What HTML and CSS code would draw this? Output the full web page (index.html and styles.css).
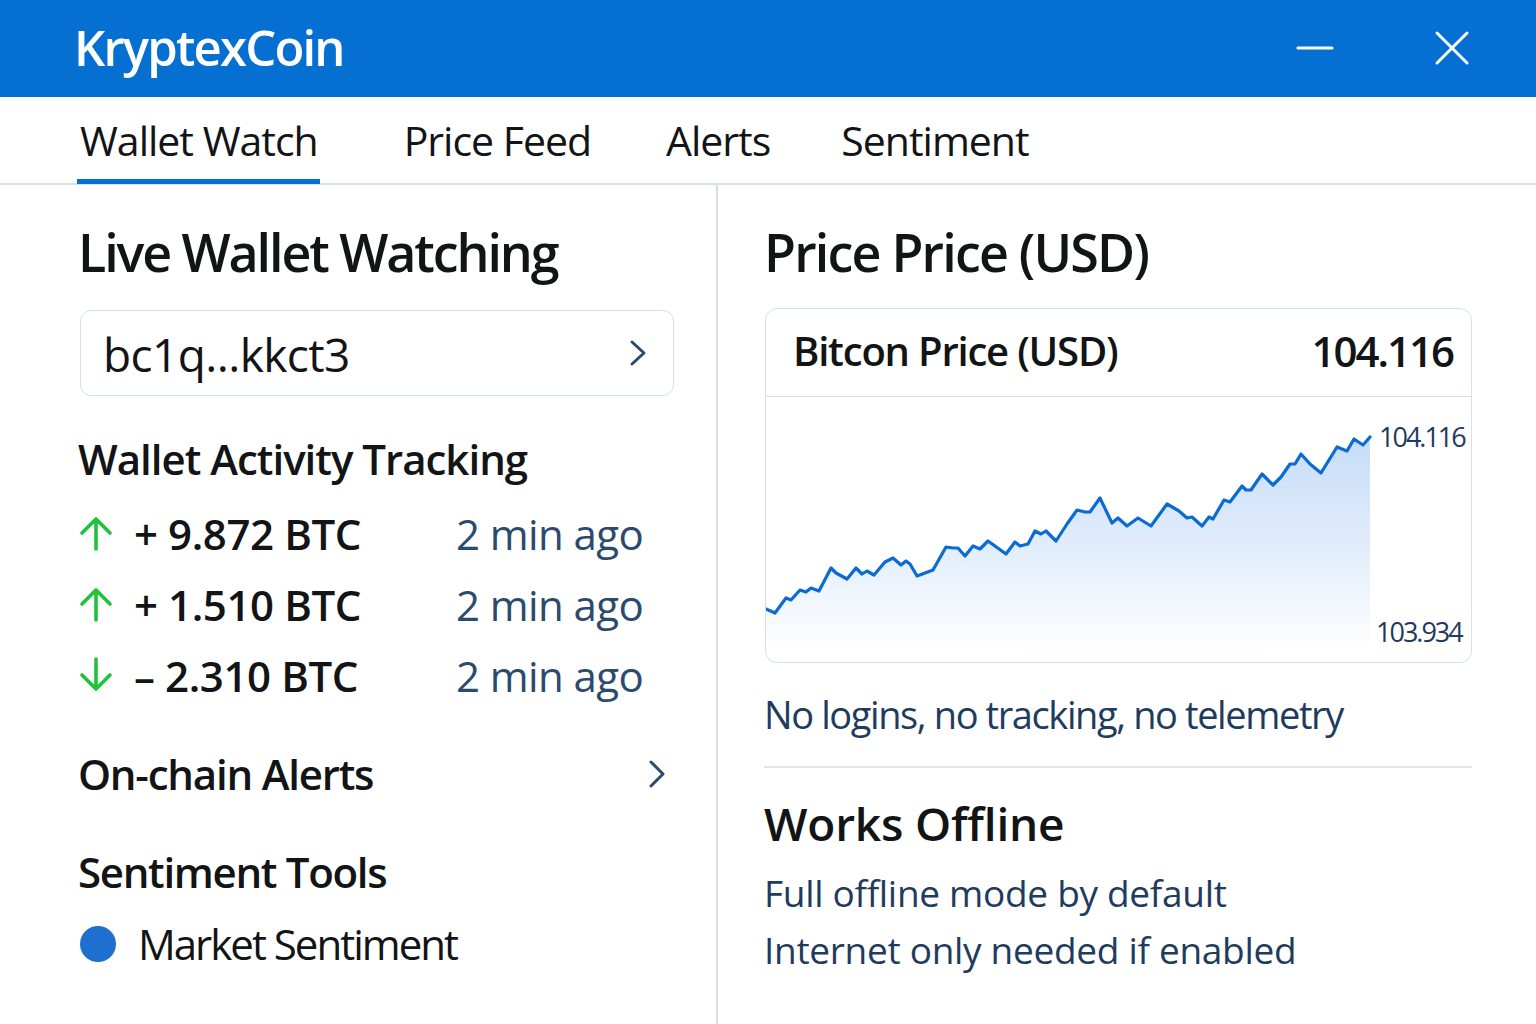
FILE: index.html
```html
<!DOCTYPE html>
<html lang="en">
<head>
<meta charset="utf-8">
<title>KryptexCoin</title>
<link rel="stylesheet" href="styles.css">
</head>
<body>
<div class="app">
  <header class="titlebar">
    <div class="brand">KryptexCoin</div>
    <div class="win-controls">
      <svg class="win-min" width="40" height="10" viewBox="0 0 40 10"><path d="M3 5 H37" stroke="#fff" stroke-width="3.2" stroke-linecap="round"/></svg>
      <svg class="win-close" width="36" height="36" viewBox="0 0 36 36"><path d="M3 3 L33 33 M33 3 L3 33" stroke="#fff" stroke-width="3" stroke-linecap="round"/></svg>
    </div>
  </header>

  <nav class="tabs">
    <div class="tab tab-active">Wallet Watch</div>
    <div class="tab">Price Feed</div>
    <div class="tab">Alerts</div>
    <div class="tab">Sentiment</div>
  </nav>

  <main class="content">
    <section class="col col-left">
      <h1 class="heading">Live Wallet Watching</h1>

      <div class="address-box">
        <span class="address">bc1q...kkct3</span>
        <svg class="chev" width="18" height="28" viewBox="0 0 18 28"><path d="M3 3 L15 14 L3 25" fill="none" stroke="#2b4a6e" stroke-width="3" stroke-linecap="round" stroke-linejoin="round"/></svg>
      </div>

      <h2 class="subheading sub-activity">Wallet Activity Tracking</h2>

      <div class="activity">
        <div class="act-row">
          <svg class="arrow" width="36" height="36" viewBox="0 0 36 36"><path d="M18 4 V34 M4 18 L18 4 L32 18" fill="none" stroke="#1fc23b" stroke-width="3.6" stroke-linecap="round" stroke-linejoin="round"/></svg>
          <span class="amount">+ 9.872 BTC</span>
          <span class="ago">2 min ago</span>
        </div>
        <div class="act-row">
          <svg class="arrow" width="36" height="36" viewBox="0 0 36 36"><path d="M18 4 V34 M4 18 L18 4 L32 18" fill="none" stroke="#1fc23b" stroke-width="3.6" stroke-linecap="round" stroke-linejoin="round"/></svg>
          <span class="amount">+ 1.510 BTC</span>
          <span class="ago">2 min ago</span>
        </div>
        <div class="act-row">
          <svg class="arrow" width="36" height="36" viewBox="0 0 36 36"><path d="M18 32 V2 M4 18 L18 32 L32 18" fill="none" stroke="#1fc23b" stroke-width="3.6" stroke-linecap="round" stroke-linejoin="round"/></svg>
          <span class="amount">&#8211; 2.310 BTC</span>
          <span class="ago">2 min ago</span>
        </div>
      </div>

      <div class="link-row">
        <span class="subheading link-title">On-chain Alerts</span>
        <svg class="chev" width="18" height="30" viewBox="0 0 18 30"><path d="M3 3 L15 15 L3 27" fill="none" stroke="#2b4a6e" stroke-width="3" stroke-linecap="round" stroke-linejoin="round"/></svg>
      </div>

      <h2 class="subheading sub-sentiment">Sentiment Tools</h2>

      <div class="sentiment-row">
        <span class="dot"></span>
        <span class="sentiment-label">Market Sentiment</span>
      </div>
    </section>

    <section class="col col-right">
      <h1 class="heading">Price Price (USD)</h1>

      <div class="price-card">
        <div class="price-head">
          <span class="price-title">Bitcon Price (USD)</span>
          <span class="price-value">104.116</span>
        </div>
        <svg class="chart" width="704" height="265" viewBox="767 398 704 265">
          <defs>
            <linearGradient id="fillGrad" x1="0" y1="0" x2="0" y2="1">
              <stop offset="0" stop-color="#c6dcf8"/>
              <stop offset="0.55" stop-color="#e3eefc"/>
              <stop offset="1" stop-color="#ffffff"/>
            </linearGradient>
          </defs>
          <polygon fill="url(#fillGrad)" points="767,610 776,614 787,599 792,601 801,591 807,593 812,589 820,592 832,569 837,574 848,580 857,569 863,575 868,572 875,576 886,563 894,559 902,566 907,562 911,565 918,577 934,571 947,548 954,549 959,549 966,557 974,547 981,550 989,542 1007,555 1016,543 1021,547 1029,545 1036,532 1042,535 1047,532 1057,542 1068,525 1078,511 1086,513 1091,513 1101,499 1113,524 1119,519 1128,527 1139,519 1152,527 1168,505 1180,512 1188,519 1193,518 1203,527 1210,518 1214,520 1225,501 1231,503 1243,487 1247,491 1252,491 1263,475 1274,486 1282,478 1291,465 1296,465 1302,455 1311,465 1322,474 1338,448 1348,452 1355,440 1364,446 1371,438 1371,650 767,650"/>
          <polyline fill="none" stroke="#0b6bd4" stroke-width="3.2" stroke-linejoin="round" stroke-linecap="round" points="767,610 776,614 787,599 792,601 801,591 807,593 812,589 820,592 832,569 837,574 848,580 857,569 863,575 868,572 875,576 886,563 894,559 902,566 907,562 911,565 918,577 934,571 947,548 954,549 959,549 966,557 974,547 981,550 989,542 1007,555 1016,543 1021,547 1029,545 1036,532 1042,535 1047,532 1057,542 1068,525 1078,511 1086,513 1091,513 1101,499 1113,524 1119,519 1128,527 1139,519 1152,527 1168,505 1180,512 1188,519 1193,518 1203,527 1210,518 1214,520 1225,501 1231,503 1243,487 1247,491 1252,491 1263,475 1274,486 1282,478 1291,465 1296,465 1302,455 1311,465 1322,474 1338,448 1348,452 1355,440 1364,446 1371,438"/>
          <text class="axis-label" x="1380" y="448">104.116</text>
          <text class="axis-label" x="1377" y="643">103.934</text>
        </svg>
      </div>

      <p class="note">No logins, no tracking, no telemetry</p>
      <div class="divider"></div>
      <h2 class="offline-title">Works Offline</h2>
      <p class="offline-line">Full offline mode by default</p>
      <p class="offline-line">Internet only needed if enabled</p>
    </section>
  </main>
</div>
</body>
</html>
```

FILE: styles.css
```css
* { box-sizing: border-box; }

html, body {
  margin: 0;
  padding: 0;
  background: #ffffff;
}

body {
  font-family: "Open Sans", "Noto Sans", sans-serif;
  color: #121416;
}

.app {
  width: 1536px;
  height: 1024px;
  overflow: hidden;
  display: flex;
  flex-direction: column;
}

/* Title bar */
.titlebar {
  height: 97px;
  flex: 0 0 97px;
  background: #0570d2;
  display: flex;
  align-items: center;
  justify-content: space-between;
  padding: 0 66px 0 74px;
}

.brand {
  color: #ffffff;
  font-size: 49px;
  font-weight: 600;
  line-height: 97px;
  letter-spacing: -1.8px;
  padding-bottom: 2px;
}

.win-controls {
  display: flex;
  align-items: center;
  gap: 99px;
  padding-bottom: 2px;
}

/* Tabs */
.tabs {
  height: 88px;
  flex: 0 0 88px;
  display: flex;
  padding-left: 80px;
  border-bottom: 2px solid #d7e2ec;
}

.tab {
  position: relative;
  font-size: 41px;
  line-height: 86px;
  color: #121416;
  letter-spacing: -1px;
}

.tab:nth-child(2) { margin-left: 86px; }
.tab:nth-child(3) { margin-left: 75px; }
.tab:nth-child(4) { margin-left: 71px; }

.tab-active::after {
  content: "";
  position: absolute;
  left: -3px;
  right: -2px;
  bottom: -1px;
  height: 5px;
  background: #0570d2;
}

/* Content */
.content {
  flex: 1;
  display: flex;
}

.col {
  display: flex;
  flex-direction: column;
}

.col-left {
  width: 720px;
  padding: 37px 0 0 78px;
  border-right: 2px solid #d3e0eb;
}

.col-right {
  flex: 1;
  padding: 37px 64px 0 46px;
}

.heading {
  margin: 0;
  font-size: 52px;
  line-height: 60px;
  font-weight: 600;
  letter-spacing: -2.1px;
  color: #121416;
}

.col-right .heading {
  letter-spacing: -1.8px;
}

.address-box {
  margin-top: 28px;
  width: 594px;
  margin-left: 2px;
  height: 86px;
  border: 1.5px solid #d5e0ea;
  border-radius: 11px;
  display: flex;
  align-items: center;
  justify-content: space-between;
  padding: 0 26px 0 22px;
}

.address {
  font-size: 46px;
  line-height: 83px;
  font-weight: 500;
  letter-spacing: -0.6px;
  color: #121416;
  padding-top: 2px;
}

.subheading {
  margin: 0;
  font-size: 42px;
  line-height: 50px;
  font-weight: 600;
  letter-spacing: -1px;
  color: #121416;
}

.link-title {
  letter-spacing: -1.2px;
}

.sub-activity { margin-top: 38px; }

.activity {
  margin-top: 14px;
  display: flex;
  flex-direction: column;
}

.act-row {
  height: 71px;
  display: grid;
  grid-template-columns: 56px 322px auto;
  align-items: center;
}

.arrow {
  margin-left: 0;
  margin-top: -2px;
}

.amount {
  font-size: 42px;
  line-height: 71px;
  font-weight: 600;
  letter-spacing: -0.4px;
  color: #121416;
}

.ago {
  font-size: 42px;
  line-height: 71px;
  color: #2b4a6e;
  letter-spacing: -0.6px;
}

.link-row {
  margin-top: 38px;
  width: 588px;
  display: flex;
  align-items: center;
  justify-content: space-between;
}

.sub-sentiment {
  margin-top: 48px;
  letter-spacing: -1.3px;
}

.sentiment-row {
  margin-top: 22px;
  height: 50px;
  display: flex;
  align-items: center;
  gap: 22px;
  padding-left: 2px;
}

.dot {
  width: 36px;
  height: 36px;
  border-radius: 50%;
  background: #1f6fd1;
  flex: 0 0 36px;
}

.sentiment-label {
  font-size: 42px;
  line-height: 50px;
  letter-spacing: -2px;
  color: #121416;
}

/* Price card */
.price-card {
  margin-top: 26px;
  width: 707px;
  margin-left: 1px;
  border: 1.5px solid #d5e0ea;
  border-radius: 12px;
  overflow: hidden;
  display: flex;
  flex-direction: column;
}

.price-head {
  height: 88px;
  display: flex;
  align-items: center;
  justify-content: space-between;
  padding: 0 18px 4px 27px;
  border-bottom: 1.5px solid #d5e0ea;
}

.price-title {
  font-size: 40px;
  line-height: 50px;
  font-weight: 600;
  letter-spacing: -1.2px;
  color: #121416;
}

.price-value {
  font-size: 42px;
  line-height: 50px;
  font-weight: 600;
  letter-spacing: -2px;
  color: #121416;
}

.chart {
  display: block;
}

.axis-label {
  font-family: "Open Sans", "Noto Sans", sans-serif;
  font-size: 27px;
  fill: #1e3a5c;
  letter-spacing: -2px;
}

.note {
  margin: 28px 0 0 0;
  font-size: 38px;
  line-height: 46px;
  color: #1f3b5e;
  letter-spacing: -1.4px;
}

.divider {
  margin-top: 29px;
  height: 2px;
  background: #dfe7ee;
}

.offline-title {
  margin: 27px 0 0 0;
  font-size: 46px;
  line-height: 56px;
  font-weight: 600;
  letter-spacing: -0.2px;
  color: #121416;
}

.offline-line {
  margin: 0;
  font-size: 37px;
  line-height: 57px;
  color: #1f3b5e;
  letter-spacing: -0.3px;
}

.offline-title + .offline-line { margin-top: 13px; }
```
